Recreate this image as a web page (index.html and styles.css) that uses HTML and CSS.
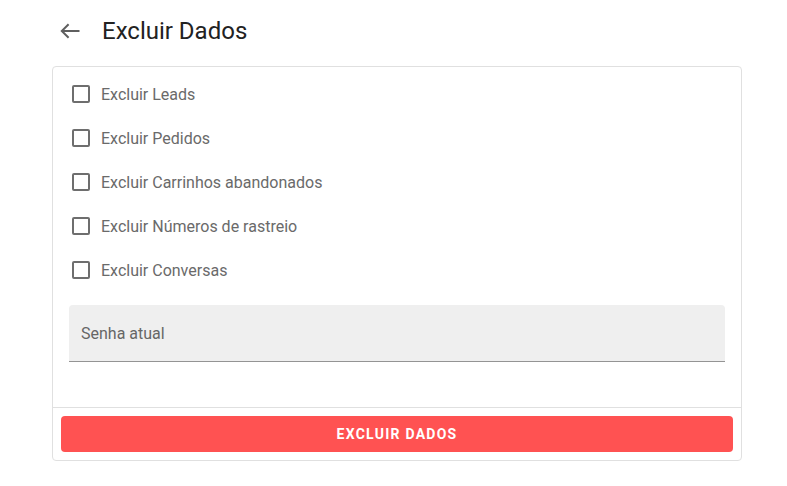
FILE: index.html
```html
<!DOCTYPE html>
<html lang="pt">
<head>
<meta charset="utf-8">
<link rel="stylesheet" href="styles.css">
</head>
<body>
<div class="page">
  <header class="header">
    <button class="back" aria-label="Voltar">
      <svg width="20" height="16" viewBox="0 0 20 16"><path d="M19.5 8H1.8M8.6 1.2L1.8 8L8.6 14.8" fill="none" stroke="#5f5f5f" stroke-width="2"/></svg>
    </button>
    <h1 class="title">Excluir Dados</h1>
  </header>
  <section class="card">
    <div class="card-body">
      <ul class="checks">
        <li class="check"><span class="box"></span><span class="label">Excluir Leads</span></li>
        <li class="check"><span class="box"></span><span class="label">Excluir Pedidos</span></li>
        <li class="check"><span class="box"></span><span class="label">Excluir Carrinhos abandonados</span></li>
        <li class="check"><span class="box"></span><span class="label">Excluir Números de rastreio</span></li>
        <li class="check"><span class="box"></span><span class="label">Excluir Conversas</span></li>
      </ul>
      <div class="field"><span class="field-label">Senha atual</span></div>
    </div>
    <div class="card-actions">
      <button class="danger">EXCLUIR DADOS</button>
    </div>
  </section>
</div>
</body>
</html>
```
FILE: styles.css
```css
* { box-sizing: border-box; }
html, body { margin: 0; padding: 0; background: #fff; }
body { font-family: Roboto, "Noto Sans", sans-serif; }
.page { padding: 0 45px 0 52px; width: 787px; }
.header { height: 62px; display: flex; align-items: center; }
.back {
  width: 20px; height: 16px; padding: 0; margin: 0 22px 0 8px;
  border: 0; background: none; display: flex; align-items: center; justify-content: center;
}
.back svg { display: block; }
.title { margin: 0; font-size: 24px; font-weight: 400; color: #222; letter-spacing: 0; }
.card {
  margin-top: 4px;
  width: 690px;
  border: 1px solid #e0e0e0;
  border-radius: 4px;
  background: #fff;
}
.card-body { padding: 5px 16px 45px; }
.checks { list-style: none; margin: 0; padding: 0; }
.check { height: 44px; display: flex; align-items: center; }
.box {
  width: 18px; height: 18px; margin: 0 11px 0 3px;
  border: 2px solid #6e6e6e; border-radius: 2px; flex: none;
}
.label { font-size: 16px; color: #6a6a6a; }
.field {
  margin-top: 13px;
  height: 57px;
  background: #efefef;
  border-bottom: 1px solid #949494;
  border-radius: 4px 4px 0 0;
  display: flex; align-items: center;
  padding: 0 12px;
}
.field-label { font-size: 16px; color: #666; }
.card-actions { border-top: 1px solid #e0e0e0; padding: 8px; }
.danger {
  width: 100%; height: 36px;
  background: #ff5252; color: #fff;
  border: 0; border-radius: 4px;
  font-family: Roboto, sans-serif; font-weight: 700; font-size: 14px;
  letter-spacing: 1.25px;
}
```
